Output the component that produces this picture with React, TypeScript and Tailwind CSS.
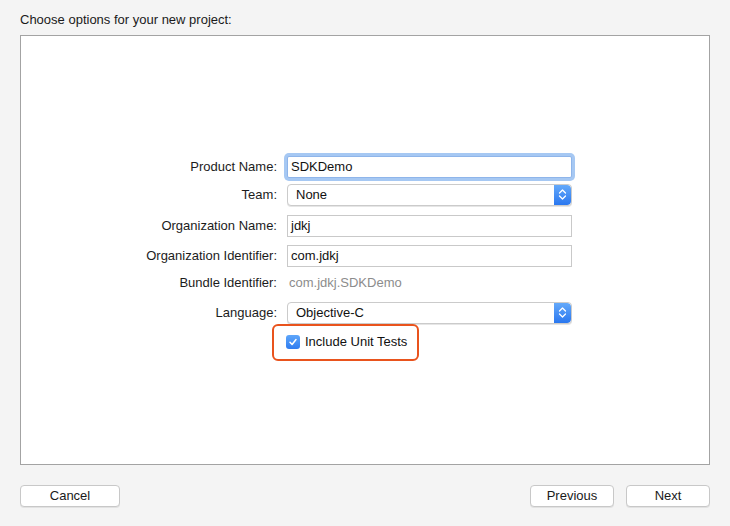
import React from "react";

// Xcode "new project" options sheet, drawn with plain flex rows.

function Label({ children }: { children: React.ReactNode }) {
  return <div className="w-[257px] shrink-0 pr-[1px] text-right text-[#1c1c1c]">{children}</div>;
}

function TextField({ value, focused }: { value: string; focused?: boolean }) {
  return (
    <div
      className={
        focused
          ? "ml-[9px] flex h-[22px] w-[285px] items-center rounded-[2px] border border-[#8fb5ea] bg-white px-[3px] shadow-[0_0_0_3px_#a6c8f3]"
          : "ml-[9px] flex h-[22px] w-[285px] items-center border border-[#c9c9c9] bg-white px-[3px]"
      }
    >
      <span className="text-[#111]">{value}</span>
    </div>
  );
}

function Stepper() {
  return (
    <div className="flex h-full w-[17px] items-center justify-center rounded-r-[4px] bg-gradient-to-b from-[#64a9fa] to-[#2a77ef]">
      <svg width="9" height="13" viewBox="0 0 9 13" fill="none">
        <path d="M1.5 5 L4.5 2 L7.5 5" stroke="white" strokeWidth="1.3" strokeLinecap="round" strokeLinejoin="round" />
        <path d="M1.5 8 L4.5 11 L7.5 8" stroke="white" strokeWidth="1.3" strokeLinecap="round" strokeLinejoin="round" />
      </svg>
    </div>
  );
}

function PopUp({ value }: { value: string }) {
  return (
    <div className="ml-[9px] flex h-[22px] w-[285px] items-center overflow-hidden rounded-[4px] border border-[#cbcbcb] bg-white shadow-[0_1px_0_#e6e6e6]">
      <span className="flex-1 pl-[8px] text-[#111]">{value}</span>
      <Stepper />
    </div>
  );
}

function MacButton({ children, width }: { children: React.ReactNode; width: string }) {
  return (
    <button
      className={`flex h-[22px] items-center justify-center rounded-[4px] border border-[#c8c8c8] bg-white text-[13px] text-[#1a1a1a] shadow-[0_1px_0_#e2e2e2] ${width}`}
    >
      {children}
    </button>
  );
}

export default function App() {
  return (
    <div
      className="flex h-[526px] w-[730px] flex-col bg-[#f4f4f4] text-[13px]"
      style={{ fontFamily: '"Liberation Sans", Arial, sans-serif' }}
    >
      <div className="pl-[20px] pt-[10px] text-[#1a1a1a]">Choose options for your new project:</div>

      <div className="ml-[20px] mt-[5px] flex h-[430px] w-[690px] flex-col border border-[#a3a3a3] bg-white">
        <div className="mt-[120px] flex items-center">
          <Label>Product Name:</Label>
          <TextField value="SDKDemo" focused />
        </div>
        <div className="mt-[6px] flex items-center">
          <Label>Team:</Label>
          <PopUp value="None" />
        </div>
        <div className="mt-[9px] flex items-center">
          <Label>Organization Name:</Label>
          <TextField value="jdkj" />
        </div>
        <div className="mt-[8px] flex items-center">
          <Label>Organization Identifier:</Label>
          <TextField value="com.jdkj" />
        </div>
        <div className="mt-[7px] flex h-[18px] items-center">
          <Label>Bundle Identifier:</Label>
          <span className="ml-[11px] text-[#8c8c8c]">com.jdkj.SDKDemo</span>
        </div>
        <div className="mt-[10px] flex items-center">
          <Label>Language:</Label>
          <PopUp value="Objective-C" />
        </div>
        <div className="ml-[251px] flex h-[37px] w-[147px] items-center rounded-[6px] border-[2.5px] border-[#e9531d] pl-[12px]">
          <span className="flex h-[14px] w-[14px] items-center justify-center rounded-[3px] bg-gradient-to-b from-[#5ea6fa] to-[#2f7cf0]">
            <svg width="10" height="10" viewBox="0 0 10 10" fill="none">
              <path d="M2 5.3 L4.1 7.5 L8 2.5" stroke="white" strokeWidth="1.5" strokeLinecap="round" strokeLinejoin="round" />
            </svg>
          </span>
          <span className="ml-[5px] text-[#111]">Include Unit Tests</span>
        </div>
      </div>

      <div className="mt-[20px] flex items-center px-[20px]">
        <MacButton width="w-[100px]">Cancel</MacButton>
        <div className="flex-1" />
        <MacButton width="w-[84px]">Previous</MacButton>
        <div className="w-[12px]" />
        <MacButton width="w-[84px]">Next</MacButton>
      </div>
    </div>
  );
}
